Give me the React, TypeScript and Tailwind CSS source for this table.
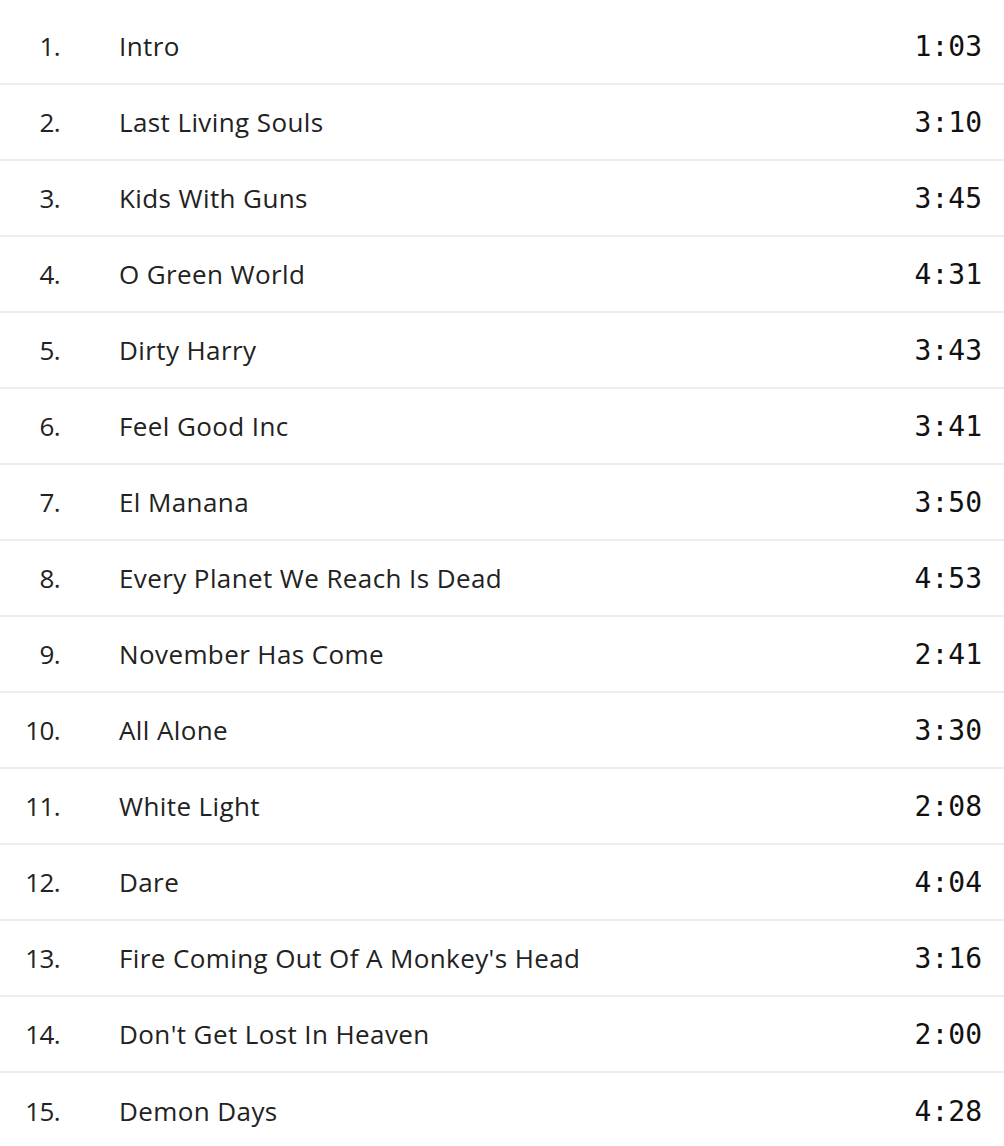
const tracks = [
  { title: 'Intro', length: '1:03' },
  { title: 'Last Living Souls', length: '3:10' },
  { title: 'Kids With Guns', length: '3:45' },
  { title: 'O Green World', length: '4:31' },
  { title: 'Dirty Harry', length: '3:43' },
  { title: 'Feel Good Inc', length: '3:41' },
  { title: 'El Manana', length: '3:50' },
  { title: 'Every Planet We Reach Is Dead', length: '4:53' },
  { title: 'November Has Come', length: '2:41' },
  { title: 'All Alone', length: '3:30' },
  { title: 'White Light', length: '2:08' },
  { title: 'Dare', length: '4:04' },
  { title: "Fire Coming Out Of A Monkey's Head", length: '3:16' },
  { title: "Don't Get Lost In Heaven", length: '2:00' },
  { title: 'Demon Days', length: '4:28' },
];

const App = () => {
  return (
    <div className="w-[1004px] h-[1146px] overflow-hidden bg-white pt-[9px]">
      <ol className="font-['Open_Sans',sans-serif] text-[#222] text-[26px] tracking-[0.4px]">
        {tracks.map((track, i) => (
          <li
            key={track.title}
            className="flex items-center h-[76px] border-b-2 border-[#ededed] last:border-b-0"
          >
            <span className="w-[60px] text-right tracking-[-0.6px]">{i + 1}.</span>
            <span className="flex-1 pl-[59px]">{track.title}</span>
            <span className="pr-[22px] pt-[2px] font-['DejaVu_Sans_Mono',monospace] text-[28px] tracking-normal text-[#111]">
              {track.length}
            </span>
          </li>
        ))}
      </ol>
    </div>
  );
};

export default App;
